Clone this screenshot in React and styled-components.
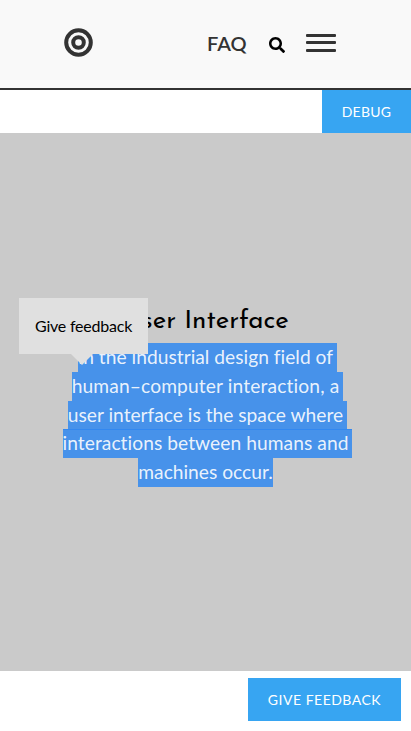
import React from "react";
import styled, { createGlobalStyle } from "styled-components";
import { FaSearch } from "react-icons/fa";

const GlobalStyle = createGlobalStyle`
  * { box-sizing: border-box; }
  body { margin: 0; background: #fff; font-family: Lato, sans-serif; font-variant-ligatures: none; overflow: hidden; }
`;

const Page = styled.div`
  width: 100%;
  height: 731px;
  display: flex;
  flex-direction: column;
`;

const Header = styled.header`
  height: 90px;
  flex: none;
  display: flex;
  align-items: center;
  justify-content: space-between;
  padding: 0 75px 3px 64px;
  background: #f9f9f9;
  border-bottom: 2px solid #333;
`;

const Logo = styled.svg`
  display: block;
  width: 29px;
  height: 29px;
`;

const Nav = styled.nav`
  display: flex;
  align-items: center;
`;

const NavLink = styled.a`
  color: #333;
  font-size: 20px;
  font-weight: 600;
  line-height: 24px;
  width: 39px;
  margin: 0 23px 0 0;
`;

const SearchIcon = styled(FaSearch)`
  width: 16px;
  height: 16px;
  margin: 4px 21px 0 0;
  color: #000;
`;

const MenuButton = styled.div`
  display: flex;
  flex-direction: column;
  justify-content: space-between;
  width: 30px;
  height: 18px;
`;

const MenuBar = styled.span`
  height: 3px;
  margin-top: ${(p) => p.$shift || 0}px;
  border-radius: 1px;
  background: #333;
`;

const Toolbar = styled.div`
  display: flex;
  justify-content: flex-end;
  flex: none;
`;

const Button = styled.button`
  width: ${(p) => p.$width}px;
  height: 43px;
  padding: 0;
  border: 0;
  background: #37a5f2;
  color: #fff;
  font: 400 14px/20px Lato, sans-serif;
  letter-spacing: ${(p) => p.$tracking}px;
  text-transform: uppercase;
  white-space: nowrap;
`;

const Hero = styled.main`
  position: relative;
  height: 538px;
  flex: none;
  padding-top: 171px;
  background: #cacaca;
`;

const Title = styled.h1`
  height: 39px;
  margin: 0;
  padding-left: 1px;
  color: #000;
  font: 400 26px/36px "Josefin Sans", Lato, sans-serif;
  text-align: center;
`;

const Selection = styled.div`
  color: rgba(255, 255, 255, 0.9);
  font-size: 19.2px;
  line-height: 28.8px;
`;

const Line = styled.div`
  display: flex;
  width: fit-content;
  height: 28.8px;
  margin: 0 auto;
  white-space: nowrap;
  letter-spacing: ${(p) => p.$tracking}px;
  background: #4792ea;
  position: relative;
  left: ${(p) => (p.$last ? 0 : 2)}px;
  padding-right: ${(p) => (p.$last ? 0 : 4)}px;
  box-shadow: ${(p) => (p.$seam ? "inset 0 1px #3388f0" : "none")};
`;

const Tooltip = styled.div`
  position: absolute;
  left: 19px;
  top: 165px;
  width: 129px;
  height: 56px;
  padding: 16px;
  background: #e0e0e0;
  color: #000;
  font-size: 16px;
  line-height: 24px;
  letter-spacing: -0.22px;
  white-space: nowrap;
  &::after {
    content: "";
    position: absolute;
    left: 52px;
    top: 56px;
    border: 11px solid transparent;
    border-top-color: #e0e0e0;
    border-bottom: 0;
  }
`;

const Footer = styled.footer`
  display: flex;
  justify-content: flex-end;
  padding: 7px 10px 10px;
`;

const lines = [
  { text: "In the industrial design field of", tracking: 0.02 },
  { text: "human–computer interaction, a", tracking: 0.14 },
  { text: "user interface is the space where", tracking: 0 },
  { text: "interactions between humans and", tracking: 0.06 },
  { text: "machines occur.", tracking: 0 },
];

export default function App() {
  return (
    <Page>
      <GlobalStyle />
      <Header>
        <Logo viewBox="0 0 29 29" fill="none" stroke="#333" strokeWidth="4">
          <circle cx="14.5" cy="14.5" r="12.3" />
          <circle cx="14.5" cy="14.5" r="5.3" />
        </Logo>
        <Nav>
          <NavLink>FAQ</NavLink>
          <SearchIcon />
          <MenuButton>
            <MenuBar />
            <MenuBar $shift={-1} />
            <MenuBar />
          </MenuButton>
        </Nav>
      </Header>
      <Toolbar>
        <Button $width={89} $tracking={0.25}>Debug</Button>
      </Toolbar>
      <Hero>
        <Title>User Interface</Title>
        <Selection>
          {lines.map(({ text, tracking }, i) => (
            <Line key={text} $tracking={tracking} $last={i === lines.length - 1} $seam={i === 3}>
              {text}
            </Line>
          ))}
        </Selection>
        <Tooltip>Give feedback</Tooltip>
      </Hero>
      <Footer>
        <Button $width={153} $tracking={0.5}>Give feedback</Button>
      </Footer>
    </Page>
  );
}
